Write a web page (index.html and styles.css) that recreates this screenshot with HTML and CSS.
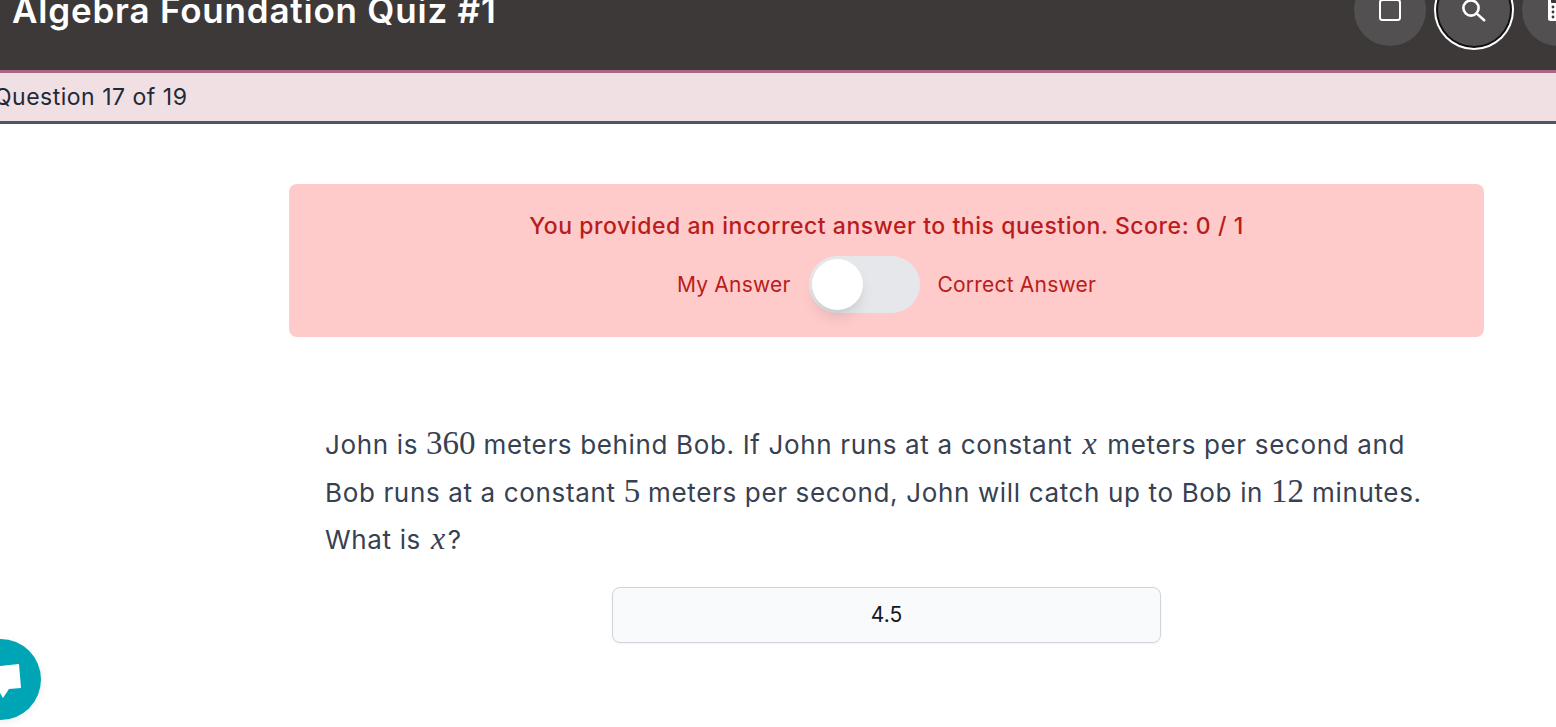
FILE: index.html
```html
<!DOCTYPE html>
<html lang="en">
<head>
    <meta charset="UTF-8">
    <meta name="viewport" content="width=device-width, initial-scale=1.0">
    <title>Algebra Foundation Quiz #1</title>
    <link rel="stylesheet" href="styles.css">
</head>
<body>
    <header class="topbar">
        <h1 class="quiz-title">Algebra Foundation Quiz #1</h1>
        <div class="tools">
            <button class="tool" type="button" aria-label="Fullscreen">
                <svg width="24" height="24" viewBox="0 0 24 24" fill="none" stroke="#fff" stroke-width="2"><rect x="2" y="2" width="20" height="20" rx="2.5"/></svg>
            </button>
            <button class="tool tool-active" type="button" aria-label="Search">
                <svg width="28" height="28" viewBox="0 0 28 28" fill="none" stroke="#fff" stroke-width="2.6" stroke-linecap="round"><circle cx="11" cy="12" r="7.6"/><path d="M16.8 17.6l7.4 6.6"/></svg>
            </button>
            <button class="tool" type="button" aria-label="Calculator">
                <svg width="24" height="28" viewBox="0 0 24 28"><rect x="2" y="1" width="20" height="24" rx="2.5" fill="#fff"/><g fill="#3d3939"><rect x="5" y="3" width="14" height="4" rx="1"/><circle cx="7" cy="11" r="1.4"/><circle cx="12" cy="11" r="1.4"/><circle cx="17" cy="11" r="1.4"/><circle cx="7" cy="16" r="1.4"/><circle cx="12" cy="16" r="1.4"/><circle cx="17" cy="16" r="1.4"/><circle cx="7" cy="21" r="1.4"/><circle cx="12" cy="21" r="1.4"/><circle cx="17" cy="21" r="1.4"/></g></svg>
            </button>
        </div>
    </header>

    <div class="progress">Question 17 of 19</div>

    <main class="content">
        <section class="result">
            <p class="result-msg">You provided an incorrect answer to this question. Score: 0 / 1</p>
            <div class="result-toggle">
                <span>My Answer</span>
                <div class="switch"><div class="knob"></div></div>
                <span>Correct Answer</span>
            </div>
        </section>

        <p class="question">
            John is <span class="num">360</span> meters behind Bob. If John runs at a constant <span class="var">x</span> meters per second and<br>
            Bob runs at a constant <span class="num">5</span> meters per second, John will catch up to Bob in <span class="num">12</span> minutes.<br>
            What is <span class="var">x</span>?
        </p>

        <div class="answer">4.5</div>
    </main>

    <div class="chat">
        <svg width="41" height="81" viewBox="0 0 41 81"><path d="M0 27L19 25L21 49L9 50L3 59L0 54Z" fill="#fff"/></svg>
    </div>
</body>
</html>
```

FILE: styles.css
```css
html, body {
    height: 100%;
}
body {
    margin: 0;
    overflow: hidden;
    background: #fff;
    font-family: Inter, "Open Sans", sans-serif;
    color: #374151;
}
.topbar {
    display: flex;
    justify-content: space-between;
    align-items: flex-start;
    height: 70px;
    padding-left: 12px;
    background: #3d3939;
    border-bottom: 3px solid #aa6586;
}
.quiz-title {
    margin: -13px 0 0;
    font-size: 35px;
    line-height: 46px;
    font-weight: 600;
    letter-spacing: 0.8px;
    color: #fff;
    white-space: nowrap;
}
.tools {
    display: flex;
    flex-shrink: 0;
    gap: 12px;
    margin-top: -26px;
    margin-right: -38px;
}
.tool {
    display: flex;
    align-items: center;
    justify-content: center;
    width: 72px;
    height: 72px;
    padding: 0;
    border: none;
    border-radius: 50%;
    background: #525050;
}
.tool-active {
    box-shadow: 0 0 0 2px #111, 0 0 0 4px #fff;
}
.progress {
    height: 48px;
    line-height: 48px;
    margin-left: -6px;
    background: #f0e0e4;
    border-bottom: 3px solid #4b5563;
    font-size: 23px;
    letter-spacing: 0.5px;
    color: #1f2937;
}
.content {
    width: 1195px;
    margin: 60px 0 0 289px;
}
.result {
    height: 153px;
    box-sizing: border-box;
    padding-top: 24px;
    background: #fecaca;
    border-radius: 8px;
    color: #b91c1c;
    text-align: center;
}
.result-msg {
    margin: 0;
    font-size: 23px;
    line-height: 36px;
    font-weight: 500;
    letter-spacing: 0.55px;
}
.result-toggle {
    display: flex;
    align-items: center;
    justify-content: center;
    gap: 18px;
    margin-top: 12px;
    font-size: 21px;
    letter-spacing: 0.2px;
}
.switch {
    width: 111px;
    height: 57px;
    box-sizing: border-box;
    padding: 3px;
    background: #e5e7eb;
    border-radius: 29px;
}
.knob {
    width: 51px;
    height: 51px;
    background: #fff;
    border-radius: 50%;
    box-shadow: 0 10px 15px -3px rgba(0, 0, 0, 0.1), 0 4px 6px -2px rgba(0, 0, 0, 0.05);
}
.question {
    margin: 84px 0 0;
    padding: 0 36px;
    font-size: 26px;
    line-height: 47.5px;
    letter-spacing: 0.65px;
    color: #374151;
    white-space: nowrap;
}
.num {
    font-family: "Liberation Serif", serif;
    font-size: 33px;
    line-height: 1;
    letter-spacing: 0;
}
.var {
    margin: 0 2px;
    font-family: "Liberation Serif", serif;
    font-style: italic;
    font-size: 32px;
    line-height: 1;
}
.answer {
    width: 549px;
    height: 56px;
    box-sizing: border-box;
    margin: 23px auto 0;
    line-height: 54px;
    background: #f9fafb;
    border: 1px solid #d1d5db;
    border-radius: 8px;
    font-size: 21px;
    text-align: center;
    color: #111827;
    box-shadow: 0 1px 2px rgba(0, 0, 0, 0.05);
}
.chat {
    position: fixed;
    left: -40px;
    top: 639px;
    width: 81px;
    height: 81px;
    background: #00a5b5;
    border-radius: 50%;
    box-shadow: 0 2px 8px rgba(0, 0, 0, 0.08);
}
.chat svg {
    position: absolute;
    left: 40px;
    top: 0;
}
```
